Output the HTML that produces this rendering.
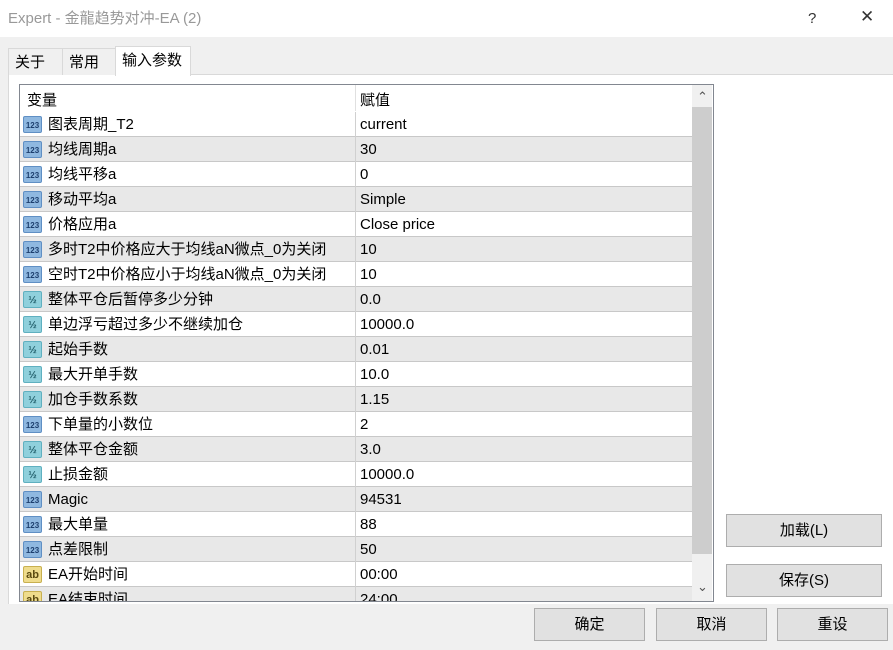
<!DOCTYPE html><html><head><meta charset="utf-8"><style>
*{margin:0;padding:0;box-sizing:border-box}
body{width:893px;height:650px;overflow:hidden;background:#f0f0f0;font-family:"Liberation Sans","Noto Sans CJK SC",sans-serif;font-size:15px;color:#000;position:relative;line-height:19px}
.title{position:absolute;left:0;top:0;width:893px;height:37px;background:#fff;}
.title span{position:absolute;left:8px;top:9px;color:#999;font-size:15px}
.abs{position:absolute}
.tab{position:absolute;top:48px;height:27px;border:1px solid #d9d9d9;border-bottom:none;background:#f0f0f0;padding:4px 0 0 6px;font-size:15px}
.panel{position:absolute;left:8px;top:74px;width:885px;height:530px;background:#fff;border-left:1px solid #d9d9d9;border-top:1px solid #d9d9d9}
.list{position:absolute;left:19px;top:84px;width:695px;height:518px;border:1px solid #828790;background:#fff;overflow:hidden}
.row{position:absolute;left:0;width:672px;height:25px;border-bottom:1px solid #c8c8c8}
.row .n{position:absolute;left:28px;top:0;line-height:25px;height:25px}
.row .v{position:absolute;left:340px;top:0;line-height:25px;height:25px}
.row .d{position:absolute;left:335px;top:0;width:1px;height:25px;background:#d0d0d0}
.ic{position:absolute;left:3px;top:4px;width:19px;height:17px;border-radius:2px;font-size:8px;font-weight:bold;text-align:center;line-height:17px;font-family:"Liberation Sans",sans-serif}
.i1{background:#8fb8e0;color:#1d3f6e;border:1px solid #5f8fc4}
.i2{background:#8fd0dc;color:#1d5a66;border:1px solid #5fb0c0;font-size:10px}
.i3{background:#efdc8c;color:#5a4a10;border:1px solid #c8b050;font-size:11px}
.btn{position:absolute;height:33px;border:1px solid #adadad;background:#e1e1e1;text-align:center;line-height:31px;font-size:15px}
</style></head><body>
<div class="title"><span>Expert - 金龍趋势对冲-EA (2)</span>
<span style="left:808px;color:#333">?</span><span style="left:860px;color:#333;font-size:17px;top:7px">✕</span></div>
<div class="panel"></div>
<div class="tab" style="left:8px;width:55px">关于</div>
<div class="tab" style="left:62px;width:54px">常用</div>
<div class="tab" style="left:115px;top:46px;height:30px;width:76px;background:#fff;border-color:#d9d9d9">输入参数</div>
<div class="list">
<div class="abs" style="left:7px;top:6px">变量</div>
<div class="abs" style="left:340px;top:6px">赋值</div>
<div class="abs" style="left:335px;top:0;width:1px;height:26px;background:#e0e0e0"></div>
<div id="rows"></div>
<div class="abs" style="left:672px;top:0;width:20px;height:518px;background:#f0f0f0"></div>
<div class="abs" style="left:672px;top:22px;width:20px;height:447px;background:#cdcdcd"></div>
<div class="abs" style="left:677px;top:2px;font-size:13px;color:#555">&#8963;</div>
<div class="abs" style="left:677px;top:492px;font-size:13px;color:#555">&#8964;</div>
</div>
<div class="btn" style="left:726px;top:514px;width:156px">加载(L)</div>
<div class="btn" style="left:726px;top:564px;width:156px">保存(S)</div>
<div class="btn" style="left:534px;top:608px;width:111px">确定</div>
<div class="btn" style="left:656px;top:608px;width:111px">取消</div>
<div class="btn" style="left:777px;top:608px;width:111px">重设</div>
<script>
var d=[["1","图表周期_T2","current"],["1","均线周期a","30"],["1","均线平移a","0"],["1","移动平均a","Simple"],["1","价格应用a","Close price"],["1","多时T2中价格应大于均线aN微点_0为关闭","10"],["1","空时T2中价格应小于均线aN微点_0为关闭","10"],["2","整体平仓后暂停多少分钟","0.0"],["2","单边浮亏超过多少不继续加仓","10000.0"],["2","起始手数","0.01"],["2","最大开单手数","10.0"],["2","加仓手数系数","1.15"],["1","下单量的小数位","2"],["2","整体平仓金额","3.0"],["2","止损金额","10000.0"],["1","Magic","94531"],["1","最大单量","88"],["1","点差限制","50"],["3","EA开始时间","00:00"],["3","EA结束时间","24:00"]];
var h="";d.forEach(function(r,i){var t=r[0]=="1"?"123":r[0]=="2"?"½":"ab";
h+='<div class="row" style="top:'+(27+25*i)+'px;background:'+(i%2?'#e8e8e8':'#fff')+'"><div class="ic i'+r[0]+'">'+t+'</div><div class="n">'+r[1]+'</div><div class="d"></div><div class="v">'+r[2]+'</div></div>';});
document.getElementById("rows").innerHTML=h;
</script>
</body></html>
